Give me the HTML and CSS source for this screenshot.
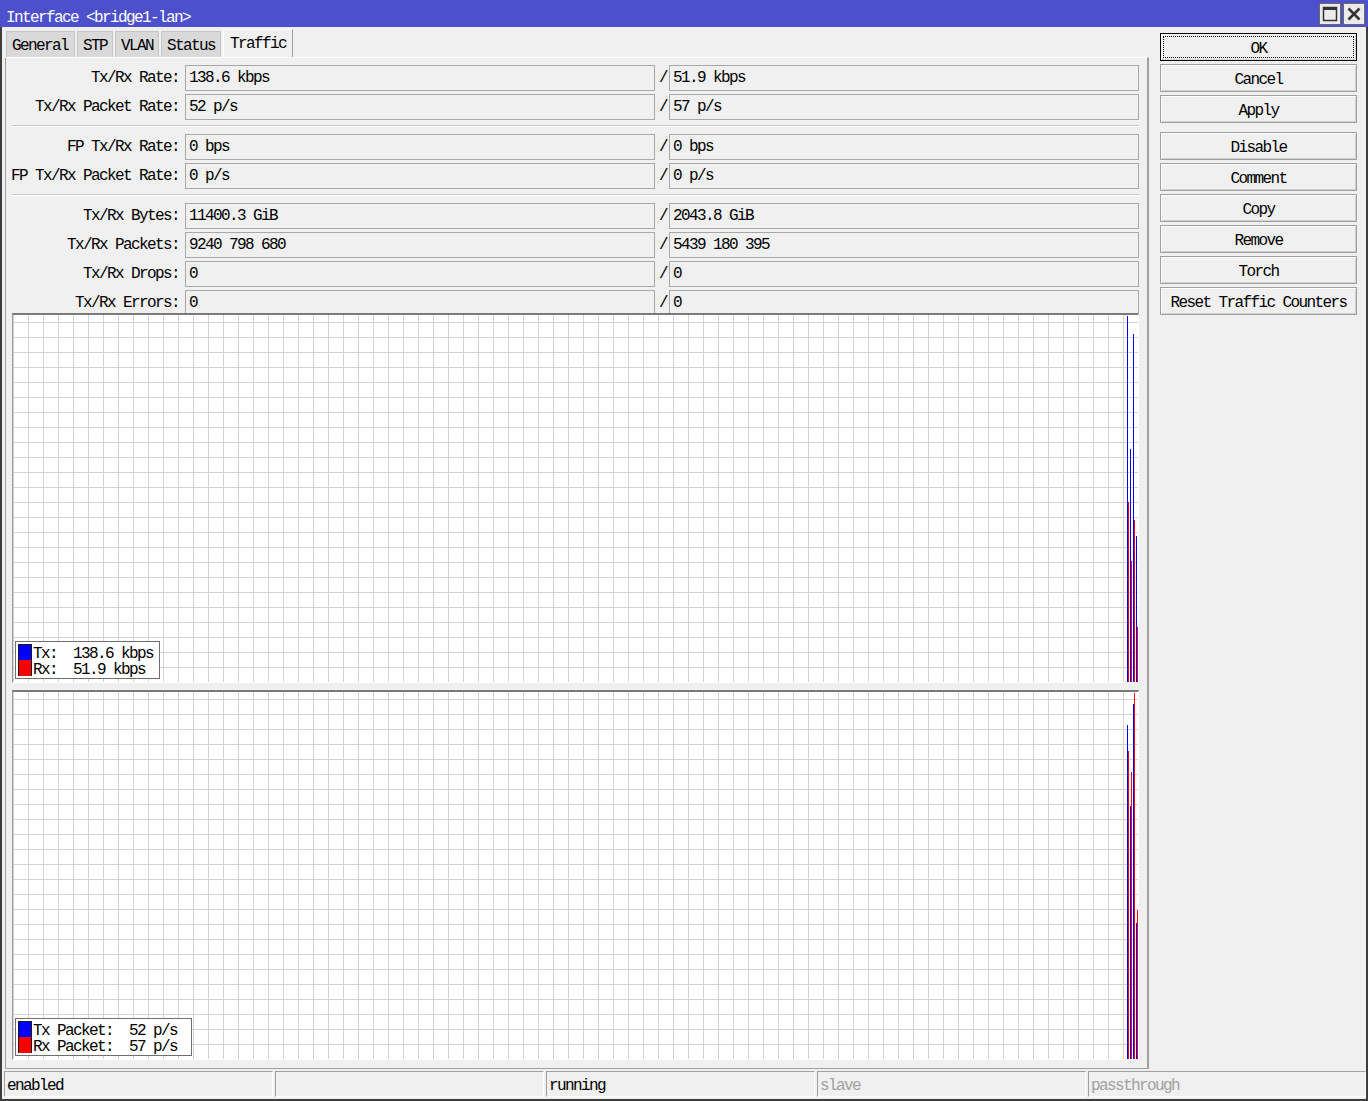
FILE: index.html
```
<!DOCTYPE html>
<html>
<head>
<meta charset="utf-8">
<link rel="stylesheet" href="styles.css">
</head>
<body>
<div class="window">
  <div class="titlebar">
    <span class="title">Interface &lt;bridge1-lan&gt;</span>
    <div class="wbtns">
      <span class="wbtn"><svg width="20" height="20" viewBox="0 0 20 20"><rect x="3.5" y="3.5" width="13" height="13" fill="none" stroke="#333" stroke-width="1.5"/><rect x="3" y="3" width="14" height="3" fill="#333"/></svg></span>
      <span class="wbtn"><svg width="20" height="20" viewBox="0 0 20 20"><path d="M4.5 4.5 L15.5 15.5 M15.5 4.5 L4.5 15.5" stroke="#333" stroke-width="2.6"/></svg></span>
    </div>
  </div>
  <div class="frame">
    <div class="main">
      <div class="tabs">
        <div class="tab first">General</div>
        <div class="tab">STP</div>
        <div class="tab">VLAN</div>
        <div class="tab">Status</div>
        <div class="tab active">Traffic</div>
      </div>
      <div class="panel">
        <div class="row"><span class="lbl">Tx/Rx Rate:</span><span class="field">138.6 kbps</span><span class="slash">/</span><span class="field">51.9 kbps</span></div>
        <div class="row"><span class="lbl">Tx/Rx Packet Rate:</span><span class="field">52 p/s</span><span class="slash">/</span><span class="field">57 p/s</span></div>
        <div class="sep"></div>
        <div class="row"><span class="lbl">FP Tx/Rx Rate:</span><span class="field">0 bps</span><span class="slash">/</span><span class="field">0 bps</span></div>
        <div class="row"><span class="lbl">FP Tx/Rx Packet Rate:</span><span class="field">0 p/s</span><span class="slash">/</span><span class="field">0 p/s</span></div>
        <div class="sep"></div>
        <div class="row"><span class="lbl">Tx/Rx Bytes:</span><span class="field">11400.3 GiB</span><span class="slash">/</span><span class="field">2043.8 GiB</span></div>
        <div class="row"><span class="lbl">Tx/Rx Packets:</span><span class="field">9240 798 680</span><span class="slash">/</span><span class="field">5439 180 395</span></div>
        <div class="row"><span class="lbl">Tx/Rx Drops:</span><span class="field">0</span><span class="slash">/</span><span class="field">0</span></div>
        <div class="row last"><span class="lbl">Tx/Rx Errors:</span><span class="field">0</span><span class="slash">/</span><span class="field">0</span></div>

        <div class="graph">
          <svg class="bars" width="1125" height="367" viewBox="0 0 1125 367">
            <rect x="1114" y="1" width="1" height="366" fill="#0000ff"/>
            <rect x="1115" y="187" width="1" height="180" fill="#ff0000"/>
            <rect x="1117" y="134" width="1" height="233" fill="#0000ff"/>
            <rect x="1118" y="246" width="1" height="121" fill="#ff0000"/>
            <rect x="1120" y="19" width="1" height="348" fill="#0000ff"/>
            <rect x="1121" y="205" width="1" height="162" fill="#ff0000"/>
            <rect x="1123" y="221" width="1" height="146" fill="#0000ff"/>
            <rect x="1124" y="312" width="1" height="55" fill="#ff0000"/>
          </svg>
          <div class="legend">
            <div class="lrow"><span class="sw blue"></span><span class="ltxt">Tx:  138.6 kbps</span></div>
            <div class="lrow"><span class="sw red"></span><span class="ltxt">Rx:  51.9 kbps</span></div>
          </div>
        </div>

        <div class="graph second">
          <svg class="bars" width="1125" height="367" viewBox="0 0 1125 367">
            <rect x="1114" y="33" width="1" height="334" fill="#0000ff"/>
            <rect x="1115" y="59" width="1" height="308" fill="#ff0000"/>
            <rect x="1117" y="114" width="1" height="253" fill="#0000ff"/>
            <rect x="1118" y="80" width="1" height="287" fill="#ff0000"/>
            <rect x="1120" y="12" width="1" height="355" fill="#0000ff"/>
            <rect x="1121" y="1" width="1" height="366" fill="#ff0000"/>
            <rect x="1123" y="231" width="1" height="136" fill="#0000ff"/>
            <rect x="1124" y="218" width="1" height="149" fill="#ff0000"/>
          </svg>
          <div class="legend wide">
            <div class="lrow"><span class="sw blue"></span><span class="ltxt">Tx Packet:  52 p/s</span></div>
            <div class="lrow"><span class="sw red"></span><span class="ltxt">Rx Packet:  57 p/s</span></div>
          </div>
        </div>
      </div>
    </div>
    <div class="side">
      <div class="btn default">OK</div>
      <div class="btn">Cancel</div>
      <div class="btn">Apply</div>
      <div class="btn group">Disable</div>
      <div class="btn">Comment</div>
      <div class="btn">Copy</div>
      <div class="btn">Remove</div>
      <div class="btn">Torch</div>
      <div class="btn">Reset Traffic Counters</div>
    </div>
  </div>
  <div class="status">
    <div class="cell">enabled</div>
    <div class="cell"></div>
    <div class="cell">running</div>
    <div class="cell dim">slave</div>
    <div class="cell dim last">passthrough</div>
  </div>
</div>
</body>
</html>
```
FILE: styles.css
```
* { box-sizing: border-box; }
html, body { margin: 0; padding: 0; }
body {
  background: #f0f0f0;
  font-family: "Liberation Mono", "DejaVu Sans Mono", monospace;
  font-size: 16px;
  letter-spacing: -1.6px;
  color: #000;
}
.window {
  width: 1368px;
  height: 1101px;
  border: 2px solid #3d3d3d;
  border-top: none;
  background: #f0f0f0;
  display: flex;
  flex-direction: column;
}
.titlebar {
  height: 27px;
  margin: 0 -2px;
  background: #4c50cd;
  color: #fff;
  display: flex;
  align-items: flex-start;
  justify-content: space-between;
  padding: 0 3px 0 6px;
  flex: none;
}
.title { white-space: pre; line-height: 36px; height: 27px; }
.wbtns { display: flex; gap: 2px; margin-top: 3px; }
.wbtn {
  width: 22px; height: 22px;
  background: #ebebeb;
  border: 1px solid #6a6a6a;
  display: flex; align-items: center; justify-content: center;
}
.frame { display: flex; height: 1042px; flex: none; }
.main { width: 1144px; margin-left: 3px; display: flex; flex-direction: column; }
.tabs {
  height: 30px;
  display: flex;
  align-items: flex-end;
  gap: 2px;
  padding-left: 1px;
  flex: none;
}
.tab {
  height: 26px;
  padding: 0 5px;
  background: #d9d9d9;
  border: 1px solid #c6c6c6;
  border-bottom: none;
  line-height: 29px;
  white-space: pre;
}
.tab.first { padding-right: 6px; }
.tab.active {
  height: 28px;
  background: #f0f0f0;
  border-color: #ffffff #a0a0a0 #f0f0f0 #ffffff;
  padding: 0 6px 0 6px;
  line-height: 29px;
}
.panel {
  flex: 1;
  display: flex;
  flex-direction: column;
  border-left: 1px solid #a0a0a0;
  border-top: 1px solid #ffffff;
  border-right: 2px solid #a0a0a0;
  border-bottom: 1px solid #a0a0a0;
  padding: 7px 0 8px 0;
}
.row {
  display: grid;
  grid-template-columns: 179px 470px 14px 470px;
  height: 22px;
  margin-bottom: 7px;
  flex: none;
}
.row.last { margin-bottom: 1px; }
.lbl { text-align: right; padding-right: 6px; line-height: 26px; white-space: pre; }
.field {
  border: 1px solid #a8a8a8;
  background: #f0f0f0;
  padding-left: 3px;
  line-height: 24px;
  white-space: pre;
}
.slash { text-align: center; line-height: 26px; padding-left: 2px; }
.sep {
  height: 2px;
  border-top: 1px solid #c8c8c8;
  border-bottom: 1px solid #ffffff;
  margin: 2px 0 7px 6px;
  width: 1127px;
  flex: none;
}
.graph {
  position: relative;
  width: 1127px;
  height: 370px;
  margin-left: 6px;
  flex: none;
  border-top: 2px solid #7a7a7a;
  border-left: 1px solid #9a9a9a;
  border-right: 1px solid #ffffff;
  border-bottom: 1px solid #ffffff;
  background-color: #ffffff;
  background-image:
    linear-gradient(to right, #d3d3d3 1px, transparent 1px),
    linear-gradient(to bottom, #d3d3d3 1px, transparent 1px);
  background-size: 15px 15px;
  background-position: 0 7px;
}
.graph.second { margin-top: 7px; }
.bars { display: block; }
.legend {
  position: absolute;
  left: 2px;
  bottom: 3px;
  background: #fff;
  border: 1px solid #6e6e6e;
  padding: 2px 6px 2px 2px;
}
.legend.wide { padding-right: 14px; }
.lrow { display: flex; height: 16px; align-items: flex-start; }
.sw { width: 14px; height: 16px; margin-right: 1px; flex: none; }
.sw.blue { background: #0000ff; border: 1px solid #1a1a1a; border-bottom: none; }
.sw.red { background: #ff0000; border-left: 1px solid #1a1a1a; border-right: 1px solid #1a1a1a; }
.ltxt { white-space: pre; line-height: 20px; height: 16px; }
.side {
  flex: 1;
  padding: 6px 0 0 11px;
  display: flex;
  flex-direction: column;
}
.btn {
  position: relative;
  width: 197px;
  height: 28px;
  margin-bottom: 3px;
  border: 1px solid #a0a0a0;
  box-shadow: inset 1px 1px 0 #ffffff, inset -1px -1px 0 #d0d0d0;
  background: #f0f0f0;
  text-align: center;
  line-height: 30px;
  white-space: pre;
  flex: none;
}
.btn.default { border-color: #000; }
.btn.default::after {
  content: "";
  position: absolute;
  left: 2px; top: 2px; right: 2px; bottom: 2px;
  border: 1px dotted #000;
}
.btn.group { margin-top: 6px; }
.status {
  height: 30px;
  flex: none;
  display: flex;
  gap: 2px;
  padding: 2px 0 2px 2px;
}
.cell {
  width: 269px;
  flex: none;
  border-top: 1px solid #a0a0a0;
  border-left: 1px solid #a0a0a0;
  border-bottom: 1px solid #ffffff;
  border-right: 1px solid #ffffff;
  padding-left: 2px;
  line-height: 29px;
  white-space: pre;
  overflow: hidden;
}
.cell.last { flex: 1; width: auto; }
.cell.dim { color: #a0a0a0; }
```
